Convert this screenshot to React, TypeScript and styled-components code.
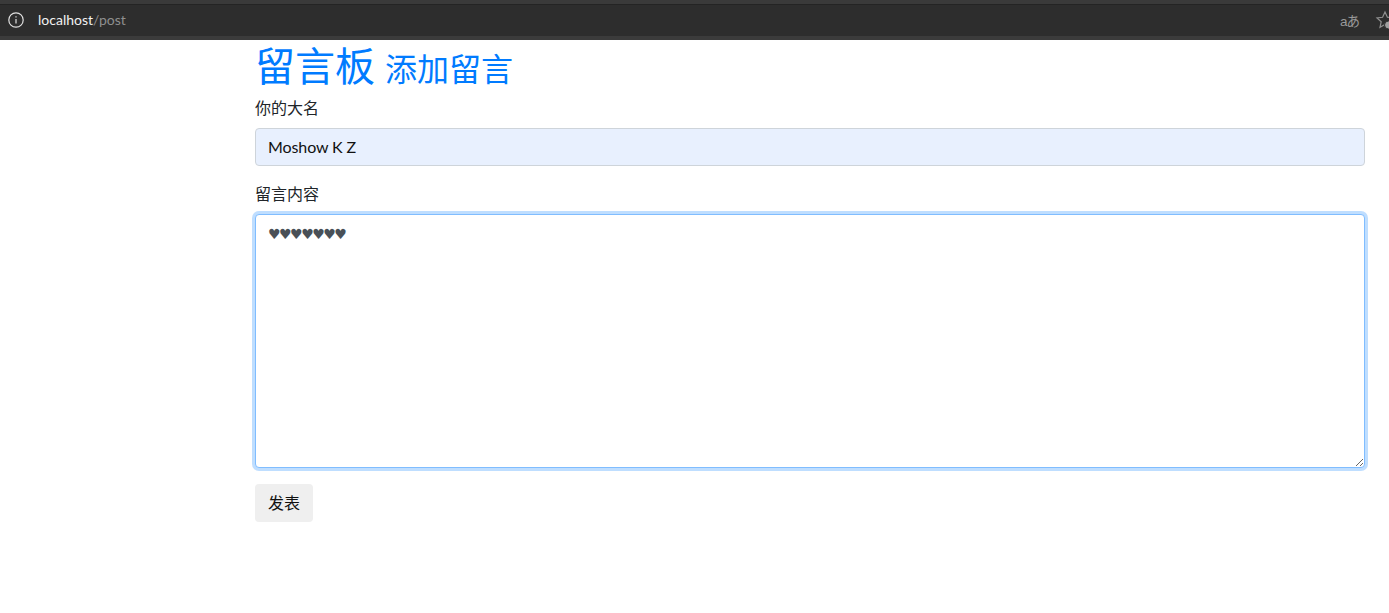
import React from "react";
import styled, { createGlobalStyle } from "styled-components";

const GlobalStyle = createGlobalStyle`
    html, body {
        margin: 0;
        padding: 0;
        background: #fff;
        overflow: hidden;
    }
    body {
        font-family: "Liberation Sans", "Noto Sans CJK SC", sans-serif;
    }
`;

const Page = styled.div`
    width: 1389px;
    height: 613px;
    overflow: hidden;
`;

const AddressBar = styled.header`
    height: 40px;
    box-sizing: border-box;
    background: #2d2d2d;
    border-top: 4px solid #3a3a3a;
    border-bottom: 4px solid #3b3b3b;
    box-shadow: inset 0 1px 0 #242424;
    display: flex;
    align-items: center;
    padding-left: 8px;
    overflow: hidden;
`;

const InfoIcon = styled.svg`
    width: 16px;
    height: 16px;
    flex: none;
    margin-right: 14px;
`;

const Url = styled.div`
    font-family: "Lato", sans-serif;
    font-size: 14px;
    line-height: 14px;
    margin-top: -1px;
    color: #8f8f8f;
    flex: 1;
`;

const Host = styled.span`
    color: #f2f2f2;
`;

const BarActions = styled.div`
    display: flex;
    align-items: center;
    gap: 16px;
    margin-right: -6px;
`;

const TranslateGlyph = styled.span`
    font-family: "Liberation Sans", "Noto Sans CJK JP", sans-serif;
    font-size: 13.5px;
    letter-spacing: -1px;
    color: #9a9a9a;
`;

const StarIcon = styled.svg`
    width: 20px;
    height: 20px;
    flex: none;
`;

const Container = styled.main`
    width: 1110px;
    margin-left: 255px;
`;

const Title = styled.h1`
    margin: 0 0 5px;
    font-family: "Noto Sans CJK SC", sans-serif;
    font-weight: 400;
    font-size: 40px;
    line-height: 48px;
    word-spacing: 1px;
    color: #007bff;
`;

const SubTitle = styled.small`
    font-size: 32px;
`;

const FormGroup = styled.div`
    margin-bottom: 16px;
`;

const Label = styled.label`
    display: block;
    margin-bottom: 10px;
    font-family: "Noto Sans CJK SC", sans-serif;
    font-size: 16px;
    line-height: 22px;
    color: #212529;
`;

const TextInput = styled.input`
    display: block;
    width: 100%;
    height: 38px;
    box-sizing: border-box;
    padding: 5px 12px 7px;
    font-family: "Lato", "Liberation Sans", sans-serif;
    font-size: 16px;
    letter-spacing: -0.1px;
    color: #111;
    background: #e8f0fe;
    border: 1px solid #ced4da;
    border-radius: 4px;
    outline: none;
`;

const TextArea = styled.textarea`
    display: block;
    width: 100%;
    height: 254px;
    box-sizing: border-box;
    padding: 7px 12px 5px;
    font-family: "DejaVu Sans", sans-serif;
    font-size: 14px;
    letter-spacing: -1.5px;
    line-height: 24px;
    color: #495057;
    background: #fff;
    border: 1px solid #80bdff;
    border-radius: 4px;
    outline: none;
    box-shadow: 0 0 0 3px rgba(0, 123, 255, 0.25);
    resize: vertical;
`;

const SubmitButton = styled.button`
    display: block;
    height: 38px;
    padding: 0 13px 2px;
    font-family: "Noto Sans CJK SC", sans-serif;
    font-size: 16px;
    color: #111;
    background: #efefef;
    border: 0;
    border-radius: 4px;
`;

export default function App() {
    return (
        <Page>
            <GlobalStyle />
            <AddressBar>
                <InfoIcon viewBox="0 0 16 16" fill="none" stroke="#e0e0e0" strokeWidth="1.2">
                    <circle cx="8" cy="8" r="7.2" />
                    <path d="M8 7v4.6M8 4.2v1.4" />
                </InfoIcon>
                <Url><Host>localhost</Host>/post</Url>
                <BarActions>
                    <TranslateGlyph>aあ</TranslateGlyph>
                    <StarIcon viewBox="0 0 20 20" fill="none" stroke="#8f8f8f" strokeWidth="1.2">
                        <path d="M10 2l2.4 5.3 5.6.6-4.2 3.8 1.2 5.6L10 14.5l-5 2.8 1.2-5.6L2 7.9l5.6-.6z" />
                        <circle cx="13.5" cy="15" r="4" fill="#a0a0a0" stroke="#2d2d2d" strokeWidth="1" />
                    </StarIcon>
                </BarActions>
            </AddressBar>
            <Container>
                <Title>留言板 <SubTitle>添加留言</SubTitle></Title>
                <FormGroup>
                    <Label>你的大名</Label>
                    <TextInput readOnly value="Moshow K Z" />
                </FormGroup>
                <FormGroup>
                    <Label>留言内容</Label>
                    <TextArea readOnly value="♥♥♥♥♥♥♥" />
                </FormGroup>
                <SubmitButton>发表</SubmitButton>
            </Container>
        </Page>
    );
}
